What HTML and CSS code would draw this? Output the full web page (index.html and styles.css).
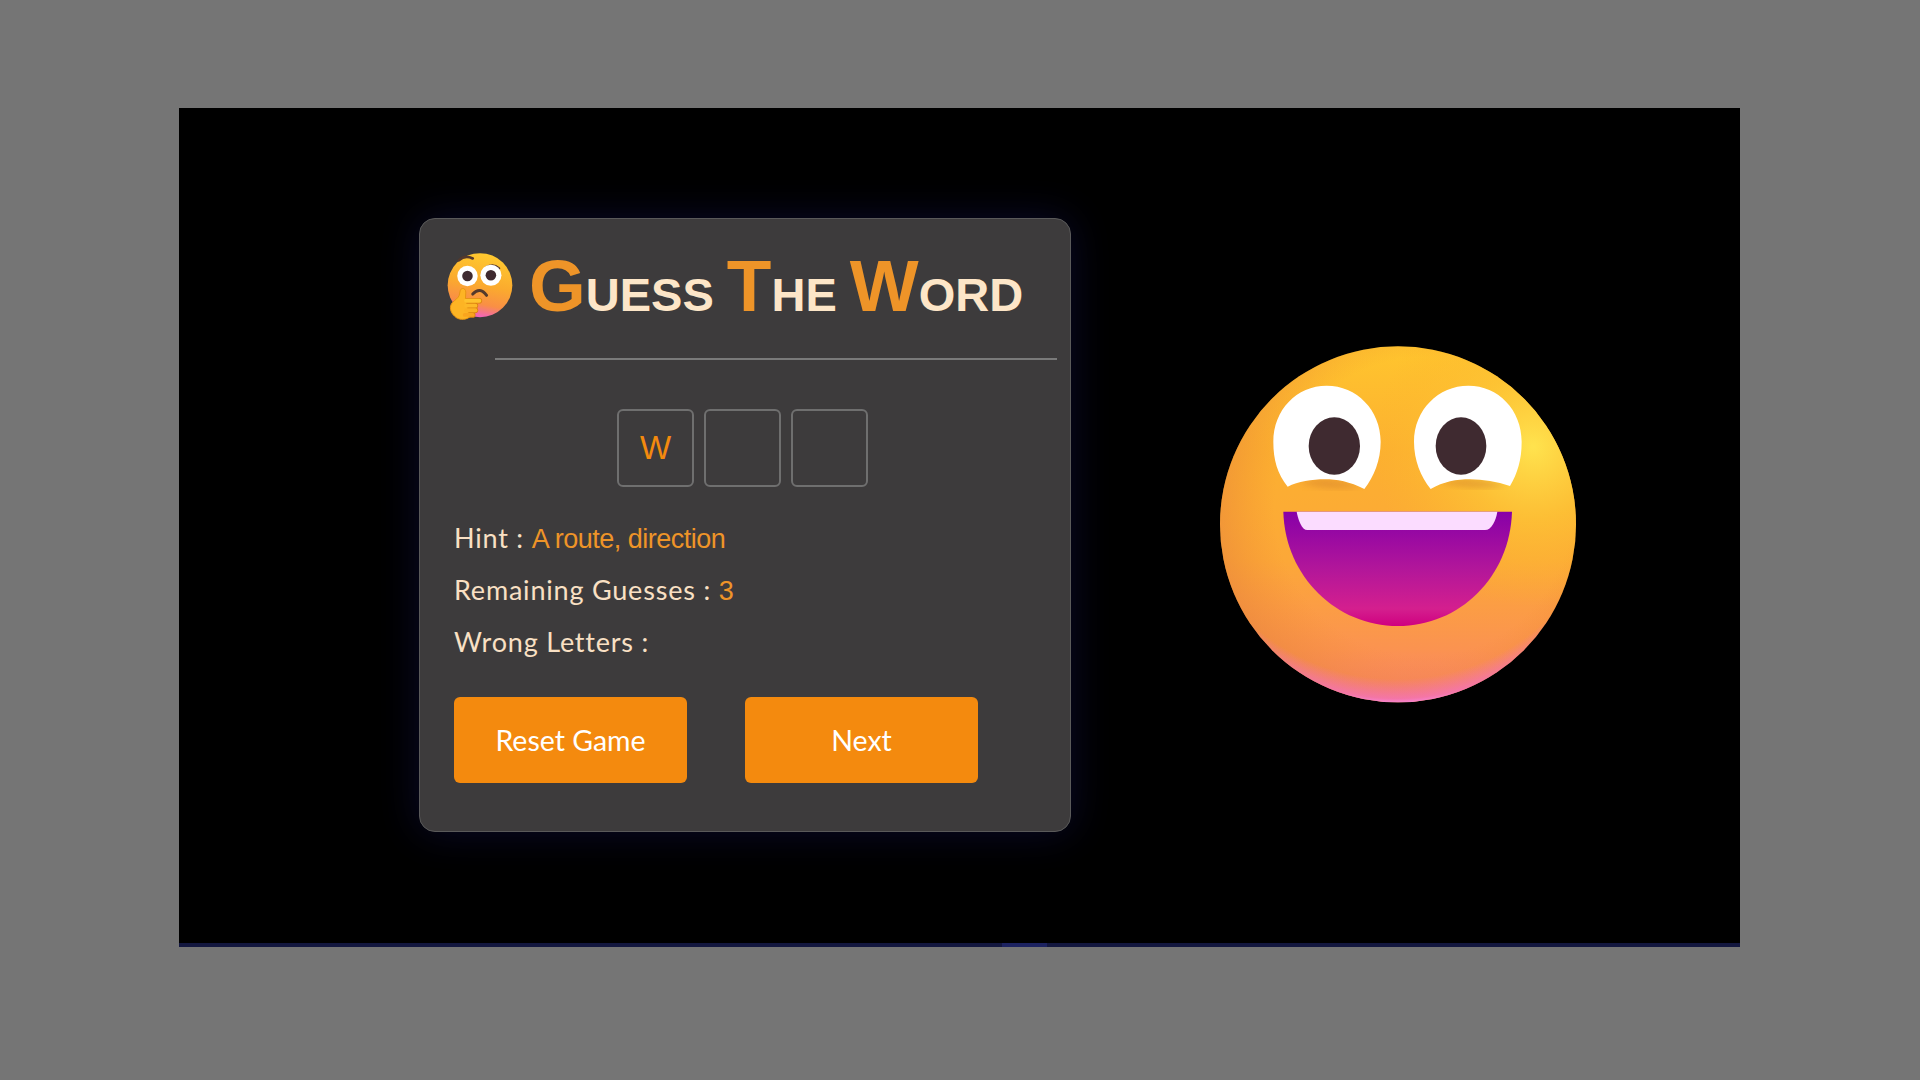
FILE: index.html
```html
<!DOCTYPE html>
<html lang="en">
<head>
  <meta charset="UTF-8" />
  <meta name="viewport" content="width=device-width, initial-scale=1.0"/>
  <title>Guess The Word</title>
  <link rel="stylesheet" href="styles.css">
</head>
<body>
  <div class="frame">
    <div class="stage">
      <div class="card">
        <div class="title-row">
          <svg class="think" viewBox="50 36 200 206" aria-hidden="true">
            <defs>
              <linearGradient id="thinkFace" x1="0.75" y1="0.05" x2="0.55" y2="1">
                <stop offset="0" stop-color="#ffc92f"/>
                <stop offset="0.5" stop-color="#fbaa2e"/>
                <stop offset="0.8" stop-color="#f98f45"/>
                <stop offset="1" stop-color="#f264b8"/>
              </linearGradient>
            </defs>
            <ellipse cx="150" cy="135" rx="98" ry="97" fill="url(#thinkFace)"/>
            <path d="M86 60 Q104 42 128 54" fill="none" stroke="#54392c" stroke-width="8" stroke-linecap="round"/>
            <path d="M170 80 Q190 68 208 84" fill="none" stroke="#54392c" stroke-width="7" stroke-linecap="round"/>
            <circle cx="112" cy="107" r="31" fill="#fff"/>
            <circle cx="183" cy="105" r="32" fill="#fff"/>
            <circle cx="112" cy="107" r="16" fill="#3f2a30"/>
            <circle cx="183" cy="105" r="16" fill="#3f2a30"/>
            <path d="M128 162 Q150 138 170 166" fill="none" stroke="#54392c" stroke-width="9" stroke-linecap="round"/>
            <g fill="none" stroke-linecap="round" stroke="#dd8410">
              <path d="M108 182 H148" stroke-width="17"/>
              <path d="M108 197 H136" stroke-width="17"/>
              <path d="M108 211 H136" stroke-width="17"/>
              <path d="M104 225 H128" stroke-width="17"/>
            </g>
            <path d="M90 152 C92 142 106 142 107 156 L106 176 L118 232 C104 242 84 240 74 230 C60 218 56 200 66 188 C76 178 84 174 87 166Z" fill="#fdb424" stroke="#e89412" stroke-width="3"/>
            <g fill="none" stroke-linecap="round" stroke-width="12">
              <path d="M108 182 H148" stroke="#ffc22e"/>
              <path d="M108 197 H136" stroke="#fdb828"/>
              <path d="M108 211 H136" stroke="#fcb024"/>
              <path d="M104 225 H128" stroke="#f9a41e"/>
            </g>
          </svg>
          <h1 class="title"><span class="cap">G</span>UESS <span class="cap">T</span>HE <span class="cap">W</span>ORD</h1>
        </div>
        <div class="divider"></div>

        <div class="letters">
          <div class="letter">W</div>
          <div class="letter"></div>
          <div class="letter"></div>
        </div>

        <div class="info">
          <p>Hint : <span class="val">A route, direction</span></p>
          <p>Remaining Guesses : <span class="val">3</span></p>
          <p>Wrong Letters :</p>
        </div>

        <div class="buttons">
          <button>Reset Game</button>
          <button>Next</button>
        </div>
      </div>

      <svg class="smile" viewBox="0 0 1260 1200" aria-hidden="true">
        <defs>
          <linearGradient id="faceBase" x1="0" y1="0" x2="0" y2="1">
            <stop offset="0" stop-color="#ffc52e"/>
            <stop offset="0.3" stop-color="#fcb030"/>
            <stop offset="0.6" stop-color="#fca838"/>
            <stop offset="0.85" stop-color="#fb9350"/>
            <stop offset="1" stop-color="#f77f70"/>
          </linearGradient>
          <radialGradient id="faceGlow" gradientUnits="userSpaceOnUse" cx="1030" cy="380" r="480">
            <stop offset="0" stop-color="#ffe34e"/>
            <stop offset="0.45" stop-color="#fdc535" stop-opacity="0.75"/>
            <stop offset="1" stop-color="#fdb52c" stop-opacity="0"/>
          </radialGradient>
          <radialGradient id="faceEdge" gradientUnits="userSpaceOnUse" cx="620" cy="420" r="730">
            <stop offset="0.9" stop-color="#f570c8" stop-opacity="0"/>
            <stop offset="0.98" stop-color="#f570c8" stop-opacity="0.7"/>
            <stop offset="1" stop-color="#f78ad8"/>
          </radialGradient>
          <radialGradient id="faceLeft" gradientUnits="userSpaceOnUse" cx="700" cy="560" r="620">
            <stop offset="0.72" stop-color="#f08a30" stop-opacity="0"/>
            <stop offset="1" stop-color="#e8853a" stop-opacity="0.55"/>
          </radialGradient>
          <linearGradient id="mouthFill" x1="0" y1="0" x2="0" y2="1">
            <stop offset="0" stop-color="#8700a8"/>
            <stop offset="0.5" stop-color="#b2169a"/>
            <stop offset="0.85" stop-color="#d41f8e"/>
            <stop offset="1" stop-color="#cf0080"/>
          </linearGradient>
          <filter id="soft" x="-20%" y="-20%" width="140%" height="140%">
            <feGaussianBlur stdDeviation="9"/>
          </filter>
        </defs>
        <circle cx="624" cy="613" r="534" fill="url(#faceBase)"/>
        <circle cx="624" cy="613" r="534" fill="url(#faceLeft)"/>
        <circle cx="624" cy="613" r="534" fill="url(#faceGlow)"/>
        <circle cx="624" cy="613" r="534" fill="url(#faceEdge)"/>

        <path d="M330 488 Q410 462 510 500 Q420 514 330 488Z" fill="#c9762a" opacity="0.4" filter="url(#soft)"/>
        <path d="M750 488 Q830 462 950 498 Q850 514 750 488Z" fill="#c9762a" opacity="0.4" filter="url(#soft)"/>

        <path d="M293 500 C262 460 250 420 250 365 C250 270 320 197 410 197 C500 197 572 270 572 365 C572 420 552 470 523 507 C480 485 440 478 405 478 C365 478 325 485 293 500Z" fill="#fff"/>
        <path d="M722 507 C692 470 672 420 672 365 C672 270 745 197 835 197 C925 197 995 270 995 365 C995 420 982 460 960 498 C920 485 880 478 840 478 C800 478 760 485 722 507Z" fill="#fff"/>
        <ellipse cx="433" cy="378" rx="77" ry="86" fill="#3f2a30"/>
        <ellipse cx="813" cy="378" rx="76" ry="86" fill="#3f2a30"/>

        <path d="M280 575 H966 C960 770 810 918 623 918 C440 918 285 770 280 575Z" fill="url(#mouthFill)"/>
        <path d="M320 575 H922 C918 600 905 630 885 630 H352 C335 630 325 600 320 575Z" fill="#fbdcff"/>
      </svg>
    </div>
    <div class="bar"></div>
  </div>
</body>
</html>
```

FILE: styles.css
```css
* {
  box-sizing: border-box;
}
body {
  margin: 0;
  height: 1080px;
  padding-top: 108px;
  background-color: #757575;
  overflow: hidden;
}
.frame {
  width: 1561px;
  height: 839px;
  margin-left: 179px;
  display: flex;
  flex-direction: column;
  background-color: #000;
}
.stage {
  flex: 1;
  display: flex;
  align-items: flex-start;
  padding: 110px 0 0 240px;
}
.bar {
  height: 4px;
  background: linear-gradient(90deg, #13173f 0, #13173f 823px, #1c2260 823px, #1c2260 868px, #13173f 868px);
}
.card {
  width: 652px;
  height: 614px;
  padding-top: 33px;
  background-color: #3d3b3c;
  border: 1px solid #5a5a5a;
  border-radius: 16px;
  box-shadow: 0 0 40px rgba(30, 30, 120, 0.35);
  color: #f9e0c4;
}
.title-row {
  display: flex;
  align-items: flex-start;
  padding-left: 27px;
  height: 72px;
}
.think {
  width: 66px;
  height: 69px;
  flex: none;
}
.title {
  margin: -8px 0 0 16px;
  font-family: "Liberation Sans", Arial, sans-serif;
  font-size: 47px;
  font-weight: 700;
  line-height: 84px;
  color: #fde6c8;
  white-space: nowrap;
}
.cap {
  font-size: 73px;
  color: #ee9428;
}
.divider {
  height: 2px;
  margin: 34px 13px 0 75px;
  background-color: #7a7a7a;
}
.letters {
  display: flex;
  gap: 10px;
  margin: 49px 0 0 197px;
}
.letter {
  width: 77px;
  height: 78px;
  display: flex;
  align-items: center;
  justify-content: center;
  border: 2px solid #6f6f6f;
  border-radius: 6px;
  font-family: "Liberation Sans", Arial, sans-serif;
  font-size: 33px;
  color: #f38a0e;
}
.info {
  margin: 25px 0 0 34px;
  font-family: Lato, sans-serif;
  font-size: 27px;
  letter-spacing: 0.8px;
}
.info p {
  margin: 0;
  height: 52px;
  line-height: 52px;
}
.val {
  font-family: "Liberation Sans", Arial, sans-serif;
  font-size: 27px;
  letter-spacing: -0.5px;
  color: #ee9428;
}
.buttons {
  display: flex;
  gap: 58px;
  margin: 29px 0 0 34px;
}
button {
  width: 233px;
  height: 86px;
  border: none;
  border-radius: 6px;
  background-color: #f48a0e;
  color: #fff;
  font-family: Lato, sans-serif;
  font-size: 28.5px;
}
.smile {
  width: 420px;
  height: 400px;
  flex: none;
  margin: 102px 0 0 119px;
}
```
